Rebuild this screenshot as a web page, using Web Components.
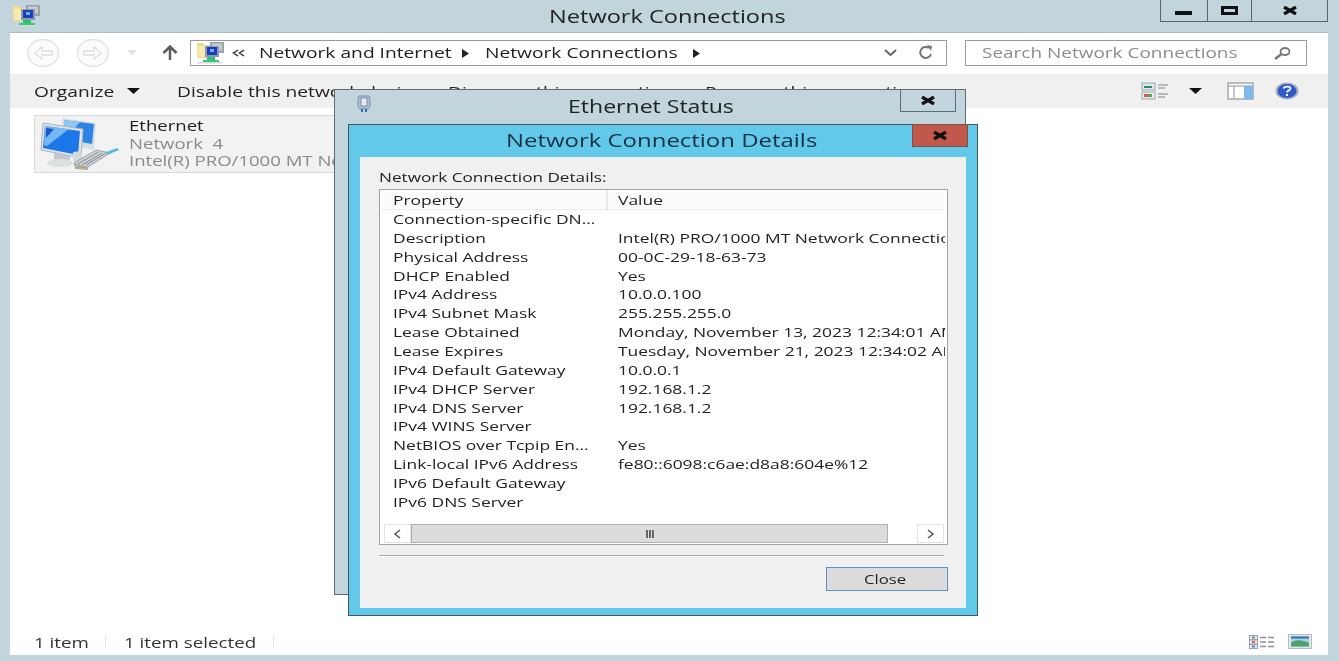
<!DOCTYPE html>
<html>
<head>
<meta charset="utf-8">
<title>Network Connections</title>
<style>
    html, body { margin: 0; padding: 0; overflow: hidden; background: #c3d5dc; }
    body { font-family: "Open Sans", "Noto Sans", sans-serif; color: #222; }
    net-dialog.status { left: 334px; top: 89px; width: 632px; height: 506px; }
    net-dialog.details { left: 348px; top: 124px; width: 630px; height: 492px; }
</style>
</head>
<body>
<net-window heading="Network Connections">
    <nav-bar></nav-bar>
    <tool-bar></tool-bar>
    <file-item name="Ethernet" sub="Network  4" detail="Intel(R) PRO/1000 MT Network Connection"></file-item>
    <status-bar></status-bar>

    <net-dialog class="status" slot="overlay" heading="Ethernet Status" icon="plug" tone="plain"></net-dialog>

    <net-dialog class="details" slot="overlay" heading="Network Connection Details" tone="active">
        <detail-panel label="Network Connection Details:">
            <detail-row name="Connection-specific DN..." nudge></detail-row>
            <detail-row name="Description">Intel(R) PRO/1000 MT Network Connection</detail-row>
            <detail-row name="Physical Address">00-0C-29-18-63-73</detail-row>
            <detail-row name="DHCP Enabled">Yes</detail-row>
            <detail-row name="IPv4 Address">10.0.0.100</detail-row>
            <detail-row name="IPv4 Subnet Mask">255.255.255.0</detail-row>
            <detail-row name="Lease Obtained">Monday, November 13, 2023 12:34:01 AM</detail-row>
            <detail-row name="Lease Expires">Tuesday, November 21, 2023 12:34:02 AM</detail-row>
            <detail-row name="IPv4 Default Gateway">10.0.0.1</detail-row>
            <detail-row name="IPv4 DHCP Server">192.168.1.2</detail-row>
            <detail-row name="IPv4 DNS Server">192.168.1.2</detail-row>
            <detail-row name="IPv4 WINS Server"></detail-row>
            <detail-row name="NetBIOS over Tcpip En...">Yes</detail-row>
            <detail-row name="Link-local IPv6 Address">fe80::6098:c6ae:d8a8:604e%12</detail-row>
            <detail-row name="IPv6 Default Gateway"></detail-row>
            <detail-row name="IPv6 DNS Server"></detail-row>
        </detail-panel>
    </net-dialog>
</net-window>

<script>
(function () {
    const ICONS = {
        netfolder: `<svg width="28" height="22" viewBox="0 0 28 22">
            <path d="M0 1h6l2 2h6v13H0z" fill="#f0dc8c"/><path d="M1 4h12v11H1z" fill="#f7eab0"/>
            <rect x="13" y="0" width="14" height="11" fill="#9aa3a8"/><rect x="15" y="1.500" width="10" height="7" fill="#c6ccd2"/>
            <rect x="8" y="4" width="14" height="11" fill="#8d97b8"/><rect x="10" y="5" width="10" height="8" fill="#1a3fb8"/>
            <rect x="13" y="7" width="4" height="3" fill="#6cb0ee"/>
            <rect x="10" y="15" width="8" height="4" fill="#2cc46a"/><rect x="6" y="18" width="16" height="2" fill="#38c878"/>
            <rect x="0" y="20" width="25" height="1.500" fill="#d4d8d8"/>
        </svg>`,
        ethernet: `<svg width="80" height="56" viewBox="0 0 80 56">
            <path d="M22 1l34 5-2 27-32-6z" fill="#d8dde0"/><path d="M24 3l30 4-2 20-28-5z" fill="#2b84e6"/>
            <path d="M24 3l16 2-14 16-2-1z" fill="#8cc6f6"/>
            <path d="M3 6l40 6-2 29-40-8z" fill="#e0e3e5" stroke="#aeb4b8"/><path d="M5 9l35 5-2 24-35-7z" fill="#1c78e8"/>
            <path d="M5 9l24 3-22 17-3-1z" fill="#74b8f5"/><path d="M6 11l8 1-8 9z" fill="#1858c8"/>
            <path d="M14 36l16 3 0 6-16-3z" fill="#c4c8ca"/><ellipse cx="20" cy="46" rx="13" ry="4" fill="#dcdfe0"/>
            <path d="M33 44c3 1 7 1 10-1l-2-9-8 1z" fill="#d6d9da"/>
            <path d="M34 46l22-13 14 3-22 14-13-1z" fill="#ced3d6" stroke="#9ca3a8"/>
            <path d="M38 47l20-12M42 48l20-12M46 48l20-12" stroke="#7d8a92" stroke-width="1" fill="none"/>
            <path d="M34 46l1 6 13 1 0-3z" fill="#aab0b4"/>
            <path d="M66 35l11-4 2 2-12 5z" fill="#58b8e8"/>
            <path d="M38 50h7" stroke="#c8a040" stroke-width="1.500"/>
        </svg>`,
        plug: `<svg width="16" height="18" viewBox="0 0 16 18">
            <path d="M3 1h10l1 2v9l-2 2H4l-2-2V3z" fill="#aebcd0" stroke="#8391a8"/>
            <rect x="5" y="3" width="6" height="8" fill="#e4e9f2" stroke="#7f8ea8"/>
            <rect x="5" y="14" width="2" height="3" fill="#2a6cc4"/><rect x="9" y="14" width="2" height="3" fill="#2a6cc4"/>
        </svg>`,
        back: `<svg width="34" height="30" viewBox="0 0 34 30"><ellipse cx="17" cy="15" rx="15.500" ry="13.500" fill="#fbfbfb" stroke="#e4e4e4" stroke-width="1.500"/><path d="M26 13h-10v-4l-7 6 7 6v-4h10z" fill="#fff" stroke="#dedede" stroke-width="1.300"/></svg>`,
        forward: `<svg width="34" height="30" viewBox="0 0 34 30"><ellipse cx="17" cy="15" rx="15.500" ry="13.500" fill="#fbfbfb" stroke="#e4e4e4" stroke-width="1.500"/><path d="M8 13h10v-4l7 6-7 6v-4h-10z" fill="#fff" stroke="#dedede" stroke-width="1.300"/></svg>`,
        caretlight: `<svg width="10" height="6" viewBox="0 0 10 6"><path d="M0 0h10L5 5z" fill="#e4e4e4"/></svg>`,
        up: `<svg width="16" height="16" viewBox="0 0 16 16"><path d="M8 15V2M1.500 8L8 1.500 14.500 8" fill="none" stroke="#5c5c5c" stroke-width="2.500"/></svg>`,
        chevrons: `<svg width="14" height="8" viewBox="0 0 14 8"><path d="M6 1L1.500 4 6 7M12 1L7.500 4 12 7" fill="none" stroke="#333" stroke-width="1.500"/></svg>`,
        arrow: `<svg width="7" height="9" viewBox="0 0 7 9"><path d="M0 0l7 4.500L0 9z" fill="#222"/></svg>`,
        chevron: `<svg width="13" height="8" viewBox="0 0 13 8"><path d="M1 1l5.500 5L12 1" fill="none" stroke="#666" stroke-width="2"/></svg>`,
        refresh: `<svg width="18" height="16" viewBox="0 0 18 16"><path d="M14 9a5.500 5.500 0 1 1-2-6" fill="none" stroke="#777" stroke-width="2"/><path d="M10 0l5 1-1 5z" fill="#777"/></svg>`,
        search: `<svg width="18" height="13" viewBox="0 0 18 13"><ellipse cx="12" cy="4.500" rx="4.500" ry="3.500" fill="none" stroke="#777" stroke-width="1.800"/><path d="M8.500 7L2 12" stroke="#777" stroke-width="2.500"/></svg>`,
        caret: `<svg width="13" height="7" viewBox="0 0 13 7"><path d="M0 0h13L6.500 6z" fill="#111"/></svg>`,
        views: `<svg width="28" height="18" viewBox="0 0 28 18">
            <rect x="1" y="1" width="13" height="7" fill="#dfe9ee" stroke="#9aa7b0"/><rect x="3" y="4" width="8" height="2" fill="#2a8a70"/>
            <rect x="1" y="10" width="13" height="7" fill="#e8ecee" stroke="#9aa7b0"/><rect x="3" y="12" width="4" height="3" fill="#d85a40"/><rect x="7" y="12" width="4" height="3" fill="#62a050"/>
            <path d="M17 3h10M17 6h7M17 12h10M17 15h7" stroke="#a0a8ae" stroke-width="1.600"/>
        </svg>`,
        pane: `<svg width="27" height="18" viewBox="0 0 27 18"><rect x="1" y="1" width="25" height="16" fill="#fff" stroke="#a8a8a8" stroke-width="1.500"/><path d="M1 4h25M7 4v13" stroke="#b4b4b4" stroke-width="1.500"/><rect x="17" y="4" width="9" height="13" fill="#7db8ee"/></svg>`,
        help: `<svg width="24" height="18" viewBox="0 0 24 18"><ellipse cx="12" cy="9" rx="11.500" ry="8.500" fill="#a8b0bc"/><ellipse cx="12" cy="9" rx="9.500" ry="7" fill="#2d5cc8"/><path d="M8.500 6.500c1-2.500 7-2.500 7 0 0 2-3.500 2-3.500 4" fill="none" stroke="#fff" stroke-width="1.800"/><rect x="11" y="12" width="2" height="2" fill="#fff"/></svg>`,
        details: `<svg width="26" height="14" viewBox="0 0 26 14">
            <rect x="0.500" y="0.500" width="8" height="4" fill="#e8ecf0" stroke="#9aa4b0"/><rect x="3" y="1.500" width="3" height="2" fill="#58a070"/>
            <rect x="0.500" y="5" width="8" height="4" fill="#e8ecf0" stroke="#9aa4b0"/><rect x="3" y="6" width="3" height="2" fill="#e06050"/>
            <rect x="0.500" y="9.500" width="8" height="4" fill="#e8ecf0" stroke="#9aa4b0"/><rect x="3" y="10.500" width="3" height="2" fill="#5080d0"/>
            <path d="M11 2.500h6M19 2.500h6M11 7h6M19 7h6M11 11.500h6M19 11.500h6" stroke="#8a929a" stroke-width="1.500"/>
        </svg>`,
        picture: `<svg width="24" height="15" viewBox="0 0 24 15"><rect x="0.500" y="0.500" width="23" height="14" fill="#dfe5ea" stroke="#b4bcc4"/><rect x="3" y="2.500" width="18" height="10" fill="#a8d0e4"/><path d="M3 9c5-4 10-3 18 0v3.500H3z" fill="#4f9f70"/><path d="M3 2.500h18v2H3z" fill="#2f70a8"/></svg>`,
        min: `<svg width="17" height="4" viewBox="0 0 17 4"><rect width="17" height="4" fill="#111"/></svg>`,
        max: `<svg width="17" height="9" viewBox="0 0 17 9"><rect x="1.500" y="1.500" width="14" height="6" fill="none" stroke="#111" stroke-width="3"/></svg>`,
        close: `<svg width="16" height="9" viewBox="0 0 16 9"><path d="M2 1l12 7M14 1L2 8" stroke="#111" stroke-width="3.200"/></svg>`
    };

    const BASE_FONT = `font-family: "Open Sans", "Noto Sans", sans-serif;`;

    // the screenshot is stretched sideways, text keeps its flow width through the host
    class WideText extends HTMLElement {
        constructor() {
            super();
            this.attachShadow({ mode: "open" });
            this.shadowRoot.innerHTML = `<style>
                    :host {
                        display: inline-block;
                        flex: none;
                    }

                    span {
                        display: inline-block;
                        white-space: pre;
                        transform: scaleX(var(--wide, 1.28));
                        transform-origin: 0 50%;
                    }
                </style><span><slot></slot></span>`;
        }
    }

    class NetIcon extends HTMLElement {
        constructor() {
            super();
            this.attachShadow({ mode: "open" });
        }

        connectedCallback() {
            const name = this.getAttribute("name");
            this.shadowRoot.innerHTML = `
                <style>
                    :host { display: inline-flex; flex: none; }
                    svg { display: block; }
                </style>
                ${ICONS[name] || ""}
            `;
        }
    }

    class NetWindow extends HTMLElement {
        constructor() {
            super();
            this.attachShadow({ mode: "open" });
        }

        connectedCallback() {
            const heading = this.getAttribute("heading") || "";
            this.shadowRoot.innerHTML = `
                <style>
                    :host {
                        display: flex;
                        flex-direction: column;
                        position: relative;
                        width: 1339px;
                        height: 661px;
                        overflow: hidden;
                        box-sizing: border-box;
                        background: #c3d5dc;
                        filter: blur(0.45px);
                        ${BASE_FONT}
                    }

                    header {
                        display: grid;
                        grid-template-columns: 1fr auto 1fr;
                        height: 33px;
                        flex: none;
                    }

                    .icon {
                        padding: 5px 0 0 13px;
                    }

                    h1 {
                        margin: 0;
                        padding-top: 4px;
                        font-size: 18px;
                        line-height: 25px;
                        font-weight: 400;
                        color: #222;
                        --wide: 1.31;
                    }

                    h1 wide-text { width: 236px; margin-left: -5px; }

                    .controls {
                        justify-self: end;
                        display: flex;
                        height: 22px;
                        margin-right: 11px;
                        box-sizing: border-box;
                        border: 1.500px solid #5a686e;
                        border-top: 0;
                    }

                    .controls div {
                        display: flex;
                        align-items: center;
                        justify-content: center;
                        box-sizing: border-box;
                        border-left: 1.500px solid #5a686e;
                    }

                    .controls div:first-child { border-left: 0; width: 46px; padding: 5px 2px 0 0; }
                    .controls div:nth-child(2) { width: 44px; }
                    .controls div:nth-child(3) { width: 76px; }

                    .page {
                        flex: 1;
                        display: flex;
                        flex-direction: column;
                        margin: 0 11px 6px 10px;
                        background: #fff;
                        box-shadow: 0 -1px 0 #aebdc4;
                    }
                </style>
                <header>
                    <div class="icon"><net-icon name="netfolder"></net-icon></div>
                    <h1><wide-text>${heading}</wide-text></h1>
                    <div class="controls">
                        <div><net-icon name="min"></net-icon></div>
                        <div><net-icon name="max"></net-icon></div>
                        <div><net-icon name="close"></net-icon></div>
                    </div>
                </header>
                <div class="page"><slot></slot></div>
                <slot name="overlay"></slot>
            `;
        }
    }

    class NavBar extends HTMLElement {
        constructor() {
            super();
            this.attachShadow({ mode: "open" });
            this.shadowRoot.innerHTML = `
                <style>
                    :host {
                        display: flex;
                        align-items: center;
                        flex: none;
                        height: 41px;
                        padding: 0 0 1px 16px;
                        box-sizing: border-box;
                        font-size: 15px;
                        color: #222;
                    }

                    .box {
                        display: flex;
                        align-items: center;
                        box-sizing: border-box;
                        height: 26px;
                        border: 1.500px solid #9a9a9a;
                        background: #fff;
                    }

                    .address { width: 757px; margin-left: 12px; padding-left: 6px; }
                    .search {
                        width: 342px;
                        margin-left: 18px;
                        padding: 0 15px 0 16px;
                        color: #8c8c8c;
                        justify-content: space-between;
                        --wide: 1.265;
                    }

                    wide-text { margin-top: -2px; line-height: 20px; }
                    .spacer { flex: 1; }
                </style>
                <net-icon name="back"></net-icon>
                <net-icon name="forward" style="margin-left:16px"></net-icon>
                <net-icon name="caretlight" style="margin-left:17px"></net-icon>
                <net-icon name="up" style="margin-left:25px"></net-icon>
                <div class="box address">
                    <net-icon name="netfolder"></net-icon>
                    <net-icon name="chevrons" style="margin-left:7px"></net-icon>
                    <wide-text style="margin-left:13px;width:187px">Network and Internet</wide-text>
                    <net-icon name="arrow" style="margin-left:16px"></net-icon>
                    <wide-text style="margin-left:15.500px;width:193px">Network Connections</wide-text>
                    <net-icon name="arrow" style="margin-left:15.500px"></net-icon>
                    <span class="spacer"></span>
                    <net-icon name="chevron"></net-icon>
                    <net-icon name="refresh" style="margin:0 11px 0 20px"></net-icon>
                </div>
                <div class="box search">
                    <wide-text style="width:256px">Search Network Connections</wide-text>
                    <net-icon name="search"></net-icon>
                </div>
            `;
        }
    }

    class ToolBar extends HTMLElement {
        constructor() {
            super();
            this.attachShadow({ mode: "open" });
            this.shadowRoot.innerHTML = `
                <style>
                    :host {
                        display: flex;
                        align-items: center;
                        flex: none;
                        height: 34px;
                        padding: 0 29px 0 24px;
                        box-sizing: border-box;
                        background: #f0f0f0;
                        font-size: 15px;
                        color: #222;
                    }

                    wide-text { margin-top: -1px; line-height: 20px; }
                    .spacer { flex: 1; }
                </style>
                <wide-text style="width:79px">Organize</wide-text>
                <net-icon name="caret" style="margin-left:13.500px"></net-icon>
                <wide-text style="margin-left:37.500px;width:245px">Disable this network device</wide-text>
                <wide-text style="margin-left:26px;width:231px">Diagnose this connection</wide-text>
                <wide-text style="margin-left:26px;width:210px">Rename this connection</wide-text>
                <span class="spacer"></span>
                <net-icon name="views"></net-icon>
                <net-icon name="caret" style="margin-left:20px"></net-icon>
                <net-icon name="pane" style="margin-left:25px"></net-icon>
                <net-icon name="help" style="margin-left:21px"></net-icon>
            `;
        }
    }

    class FileItem extends HTMLElement {
        constructor() {
            super();
            this.attachShadow({ mode: "open" });
        }

        connectedCallback() {
            this.shadowRoot.innerHTML = `
                <style>
                    :host {
                        display: flex;
                        align-self: flex-start;
                        box-sizing: border-box;
                        width: 320px;
                        height: 58px;
                        margin: 7px 0 0 24px;
                        padding: 1px 0 0 5px;
                        gap: 9px;
                        background: #f2f2f2;
                        border: 1px solid #d8d8d8;
                    }

                    div {
                        font-size: 14.500px;
                        line-height: 17.500px;
                        color: #8a8a8a;
                    }

                    wide-text { display: block; }
                    .name { color: #222; }
                </style>
                <net-icon name="ethernet"></net-icon>
                <div>
                    <wide-text class="name">${this.getAttribute("name")}</wide-text>
                    <wide-text>${this.getAttribute("sub")}</wide-text>
                    <wide-text>${this.getAttribute("detail")}</wide-text>
                </div>
            `;
        }
    }

    class StatusBar extends HTMLElement {
        constructor() {
            super();
            this.attachShadow({ mode: "open" });
            this.shadowRoot.innerHTML = `
                <style>
                    :host {
                        display: flex;
                        align-items: center;
                        margin-top: auto;
                        flex: none;
                        height: 27px;
                        padding: 0 16px 0 24px;
                        box-sizing: border-box;
                        font-size: 15px;
                        color: #333;
                        --wide: 1.25;
                    }

                    i { width: 1px; height: 14px; background: #e6e6e6; margin: 0 18px; }
                    .spacer { flex: 1; }
                </style>
                <wide-text style="width:53px">1 item</wide-text>
                <i></i>
                <wide-text style="width:131px">1 item selected</wide-text>
                <i></i>
                <span class="spacer"></span>
                <net-icon name="details"></net-icon>
                <net-icon name="picture" style="margin-left:13px"></net-icon>
            `;
        }
    }

    class NetDialog extends HTMLElement {
        constructor() {
            super();
            this.attachShadow({ mode: "open" });
        }

        connectedCallback() {
            const active = this.getAttribute("tone") === "active";
            const icon = this.getAttribute("icon");
            this.shadowRoot.innerHTML = `
                <style>
                    :host {
                        display: flex;
                        flex-direction: column;
                        position: absolute;
                        box-sizing: border-box;
                        border: 1.500px solid ${active ? "#44565e" : "#5f6d73"};
                        background: ${active ? "#63c9ea" : "#c3d5dc"};
                    }

                    header {
                        position: relative;
                        flex: none;
                        height: ${active ? "32px" : "34px"};
                        display: flex;
                        justify-content: center;
                        align-items: center;
                    }

                    h2 {
                        margin: 0 0 2px;
                        font-size: 18px;
                        font-weight: 400;
                        color: ${active ? "#123244" : "#222"};
                        --wide: ${active ? "1.33" : "1.28"};
                    }

                    h2 wide-text { width: ${active ? "310px" : "165px"}; margin-left: ${active ? "-4px" : "0"}; }

                    .glyph { position: absolute; left: 21px; top: 5px; }

                    .close {
                        position: absolute;
                        top: -1px;
                        right: 9px;
                        width: 56px;
                        height: 23px;
                        box-sizing: border-box;
                        display: flex;
                        align-items: center;
                        justify-content: center;
                        border: 1.500px solid ${active ? "#7d5048" : "#5f6d73"};
                        background: ${active ? "#c0584c" : "transparent"};
                    }

                    main {
                        flex: 1;
                        display: flex;
                        min-height: 0;
                        margin: 0 11px 7px 11px;
                        background: #f0f0f0;
                    }
                </style>
                <header>
                    ${icon ? `<net-icon class="glyph" name="${icon}"></net-icon>` : ""}
                    <h2><wide-text>${this.getAttribute("heading") || ""}</wide-text></h2>
                    <div class="close"><net-icon name="close"></net-icon></div>
                </header>
                ${active ? "<main><slot></slot></main>" : ""}
            `;
        }
    }

    class DetailPanel extends HTMLElement {
        constructor() {
            super();
            this.attachShadow({ mode: "open" });
        }

        connectedCallback() {
            this.shadowRoot.innerHTML = `
                <style>
                    :host {
                        display: flex;
                        flex-direction: column;
                        flex: 1;
                        min-width: 0;
                        padding: 10px 18px 16px 19px;
                        box-sizing: border-box;
                        font-size: 13.500px;
                        color: #222;
                        --wide: 1.29;
                    }

                    .label { line-height: 20px; height: 22px; --wide: 1.27; }

                    .list {
                        display: flex;
                        flex-direction: column;
                        height: 356px;
                        box-sizing: border-box;
                        border: 1.500px solid #a4a4a4;
                        padding: 0 2px 1px;
                        background: #fff;
                    }

                    .head {
                        display: grid;
                        grid-template-columns: 224px 1fr;
                        height: 19px;
                        flex: none;
                        line-height: 21px;
                        background: #fcfcfc;
                        border-bottom: 1px solid #ececec;
                    }

                    .head span { padding-left: 11px; }
                    .head span + span { padding-left: 10px; border-left: 2px solid #e8e8e8; }

                    .rows { flex: 1; min-height: 0; overflow: hidden; }

                    .bar {
                        display: flex;
                        flex: none;
                        height: 19px;
                        margin: 0 1px 0 2px;
                        background: #fff;
                    }

                    .bar div { display: flex; align-items: center; justify-content: center; box-sizing: border-box; }
                    .end { width: 27px; border: 1px solid #e2e2e2; }
                    .thumb { width: 477px; background: #dcdcdc; border: 1.500px solid #b0b0b0; gap: 1px; }
                    .thumb i { width: 2px; height: 8px; background: #666; }
                    .gap { flex: 1; }

                    svg { display: block; }

                    hr {
                        margin: 10px 4px 0 0;
                        border: 0;
                        height: 1px;
                        background: #a8a8a8;
                        box-shadow: 0 1px 0 #fff;
                    }

                    .foot { display: flex; justify-content: flex-end; margin-top: 11px; }

                    .button {
                        display: flex;
                        align-items: center;
                        justify-content: center;
                        box-sizing: border-box;
                        width: 122px;
                        height: 24px;
                        background: #dcdcdc;
                        border: 1.500px solid #5f92bd;
                        --wide: 1.24;
                    }

                    .button wide-text { width: 42px; margin-left: -4px; }
                </style>
                <div class="label"><wide-text>${this.getAttribute("label") || ""}</wide-text></div>
                <div class="list">
                    <div class="head"><span><wide-text>Property</wide-text></span><span><wide-text>Value</wide-text></span></div>
                    <div class="rows"><slot></slot></div>
                    <div class="bar">
                        <div class="end"><svg width="9" height="10" viewBox="0 0 9 10"><path d="M7 1L2 5l5 4" fill="none" stroke="#555" stroke-width="1.500"/></svg></div>
                        <div class="thumb"><i></i><i></i><i></i></div>
                        <div class="gap"></div>
                        <div class="end"><svg width="9" height="10" viewBox="0 0 9 10"><path d="M2 1l5 4-5 4" fill="none" stroke="#555" stroke-width="1.500"/></svg></div>
                    </div>
                </div>
                <hr>
                <div class="foot"><div class="button"><wide-text>Close</wide-text></div></div>
            `;
        }
    }

    class DetailRow extends HTMLElement {
        constructor() {
            super();
            this.attachShadow({ mode: "open" });
        }

        connectedCallback() {
            this.shadowRoot.innerHTML = `
                <style>
                    :host {
                        display: grid;
                        grid-template-columns: 224px minmax(0, 1fr);
                        height: 18.870px;
                        line-height: 18.870px;
                    }

                    span { padding-left: 11px; overflow: hidden; }
                    span + span { padding-left: 12px; }
                    :host([nudge]) span:first-child { padding-left: 10px; }
                </style>
                <span><wide-text>${this.getAttribute("name") || ""}</wide-text></span>
                <span><wide-text><slot></slot></wide-text></span>
            `;
        }
    }

    customElements.define("wide-text", WideText);
    customElements.define("net-icon", NetIcon);
    customElements.define("net-window", NetWindow);
    customElements.define("nav-bar", NavBar);
    customElements.define("tool-bar", ToolBar);
    customElements.define("file-item", FileItem);
    customElements.define("status-bar", StatusBar);
    customElements.define("net-dialog", NetDialog);
    customElements.define("detail-panel", DetailPanel);
    customElements.define("detail-row", DetailRow);
})();
</script>
</body>
</html>
